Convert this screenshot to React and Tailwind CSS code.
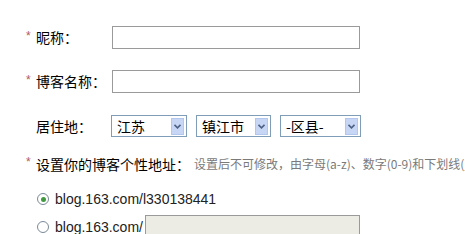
import React from "react";

const cjk = { fontFamily: '"Noto Sans CJK SC", "Noto Sans", sans-serif' };

function Star() {
  return (
    <span className="shrink-0 w-[10px] text-[12px] text-[#b35a5a] leading-none -mt-[4px] font-['Liberation_Sans',sans-serif]">
      *
    </span>
  );
}

function Select({ value, width }) {
  return (
    <div
      className="flex items-center justify-between h-[22px] border border-[#7f9db9] bg-white pl-[5px] pr-[2px]"
      style={{ width }}
    >
      <span className="text-[14px] text-black leading-none">{value}</span>
      <span className="flex items-center justify-center w-[13px] h-[17px] bg-[#c7d6f5] border border-[#b3c6ee]">
        <svg width="7" height="5" viewBox="0 0 7 5">
          <path d="M0.5 0.8 L3.5 3.8 L6.5 0.8" fill="none" stroke="#4d6185" strokeWidth="1.6" />
        </svg>
      </span>
    </div>
  );
}

function Radio({ checked }) {
  return (
    <span className="shrink-0 flex items-center justify-center w-[12px] h-[12px] rounded-full border border-[#7a8a99] bg-white ml-[11px] mr-[6px]">
      {checked && <span className="w-[5px] h-[5px] rounded-full bg-[#3f9a3f]" />}
    </span>
  );
}

export default function App() {
  return (
    <div className="w-[465px] h-[234px] overflow-hidden bg-white pt-[26px] pl-[26px]" style={cjk}>
      <div className="flex items-center h-[23px]">
        <div className="flex items-center w-[86px]">
          <Star />
          <span className="text-[14px] text-black">昵称：</span>
        </div>
        <div className="w-[248px] h-[23px] border border-[#9a9a9a] bg-white" />
      </div>

      <div className="flex items-center h-[23px] mt-[21px]">
        <div className="flex items-center w-[86px]">
          <Star />
          <span className="text-[14px] text-black">博客名称：</span>
        </div>
        <div className="w-[248px] h-[23px] border border-[#9a9a9a] bg-white" />
      </div>

      <div className="flex items-center h-[22px] mt-[22px]">
        <div className="flex items-center w-[85px] pl-[10px]">
          <span className="text-[14px] text-black">居住地：</span>
        </div>
        <div className="flex items-center gap-[9px]">
          <Select value="江苏" width={76} />
          <Select value="镇江市" width={75} />
          <Select value="-区县-" width={81} />
        </div>
      </div>

      <div className="flex items-center h-[20px] mt-[17px] whitespace-nowrap">
        <Star />
        <span className="shrink-0 text-[14px] text-black">设置你的博客个性地址：</span>
        <span className="shrink-0 text-[12px] text-[#7a7a7a] ml-[4px]">
          设置后不可修改，由字母(a-z)、数字(0-9)和下划线(_)组成
        </span>
      </div>

      <div className="flex items-center h-[20px] mt-[15px]">
        <Radio checked />
        <span className="text-[14px] text-[#222] font-['Liberation_Sans',sans-serif]">
          blog.163.com/l330138441
        </span>
      </div>

      <div className="flex items-center h-[24px] mt-[6px]">
        <Radio />
        <span className="text-[14px] text-[#222] font-['Liberation_Sans',sans-serif]">
          blog.163.com/
        </span>
        <div className="w-[215px] h-[24px] ml-[2px] border border-[#9a9a9a] bg-[#ecebe4]" />
      </div>
    </div>
  );
}
